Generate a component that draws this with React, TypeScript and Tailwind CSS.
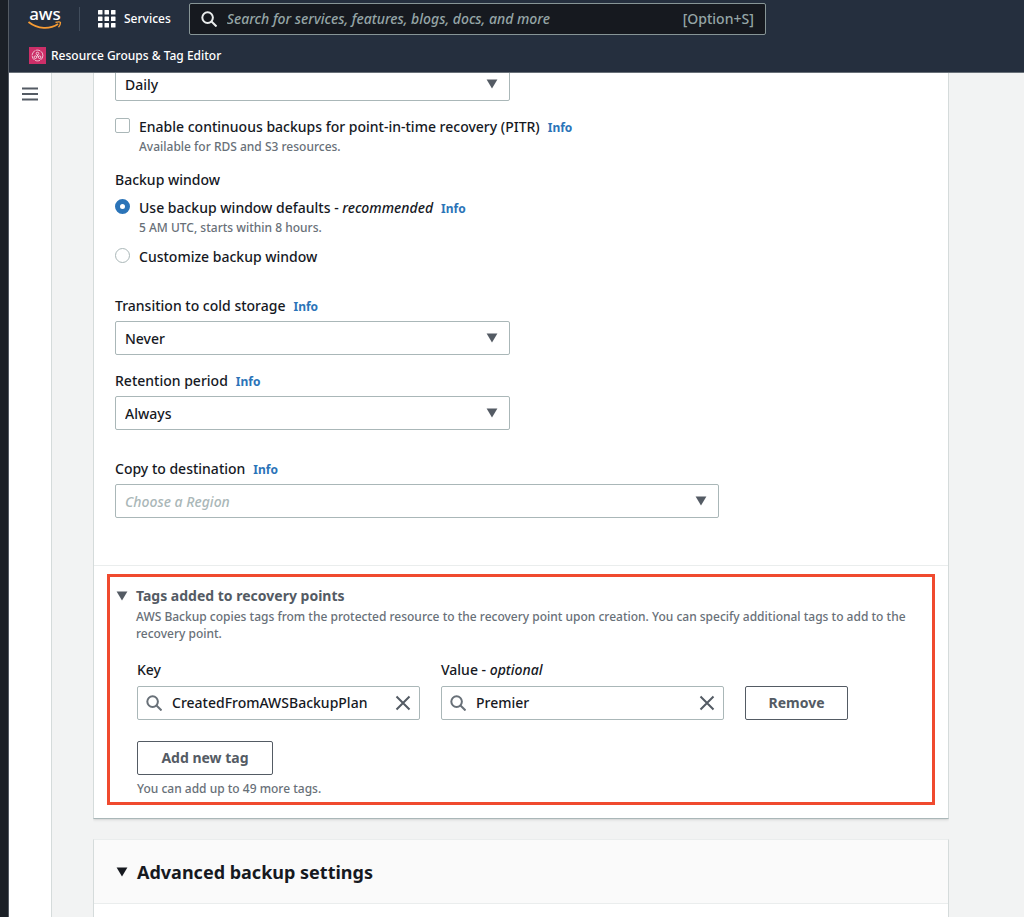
import type { ReactNode } from 'react';

const fieldBorder = 'border border-[#aab7b8] rounded-[2px]';

function InfoLink() {
  return (
    <a href="#info" className="ml-2 text-xs font-bold text-[#2b74b8]">
      Info
    </a>
  );
}

function Caret({ className }: { className: string }) {
  return (
    <svg className={className} viewBox="0 0 12 10" fill="currentColor">
      <path d="M0.6 0.5h10.8L6 9.6z" />
    </svg>
  );
}

function SearchIcon({ className }: { className: string }) {
  return (
    <svg className={className} viewBox="0 0 16 16" fill="none" stroke="currentColor" strokeWidth={2}>
      <circle cx="6.6" cy="6.6" r="5.3" />
      <path d="M10.5 10.5l5 5" />
    </svg>
  );
}

interface SelectBoxProps {
  id: string;
  value: string;
  ariaLabel?: string;
  placeholder?: boolean;
}

function SelectBox({ id, value, ariaLabel, placeholder }: SelectBoxProps) {
  return (
    <div className="relative">
      <select
        id={id}
        aria-label={ariaLabel}
        defaultValue={value}
        className={`block h-[34px] w-full appearance-none bg-white px-[9px] pt-px text-sm ${fieldBorder} ${
          placeholder ? 'italic text-[#aab7b8]' : ''
        }`}
      >
        <option>{value}</option>
      </select>
      <Caret className="pointer-events-none absolute right-3 top-3 h-[10px] w-3 text-[#545b64]" />
    </div>
  );
}

function Field({ id, label, children }: { id: string; label: string; children: ReactNode }) {
  return (
    <div>
      <div className="mb-1 leading-[22px]">
        <label htmlFor={id}>{label}</label>
        <InfoLink />
      </div>
      {children}
    </div>
  );
}

function TagInput({ id, value, label }: { id: string; value: string; label: ReactNode }) {
  return (
    <div className="w-[283px]">
      <label htmlFor={id} className="mb-[5px] block leading-[22px]">
        {label}
      </label>
      <div className={`flex h-[34px] items-center bg-white px-2 ${fieldBorder}`}>
        <SearchIcon className="h-4 w-4 shrink-0 text-[#687078]" />
        <input id={id} defaultValue={value} className="ml-[10px] min-w-0 flex-1 outline-none" />
        <button aria-label="Clear" className="shrink-0 text-[#545b64]">
          <svg className="h-4 w-4" viewBox="0 0 16 16" fill="none" stroke="currentColor" strokeWidth={2}>
            <path d="M1.5 1.5l13 13m0-13l-13 13" />
          </svg>
        </button>
      </div>
    </div>
  );
}

function Header() {
  return (
    <header className="h-[73px] border-b border-[#687078] bg-[#252f3e] text-white">
      <div className="flex h-[37px] items-center">
        <a href="#home" aria-label="aws" className="ml-[18px] flex h-6 w-9 flex-col items-center">
          <span className="text-[17px] leading-[14px]">aws</span>
          <svg className="h-2 w-9" viewBox="0 0 36 8" fill="none" stroke="#f79c34">
            <path d="M1.5 1C11 8.5 23 8.5 31 3" strokeWidth={1.8} />
            <path d="M28.5 1.4c3-.9 5-.5 5 .1 0 1.500-.7 3.300-2 4.800" strokeWidth={1.3} />
          </svg>
        </a>
        <div className="ml-4 h-6 w-px bg-[#414d5c]" />
        <button className="ml-[18px] flex items-center gap-2 text-xs">
          <svg className="h-[18px] w-[18px]" viewBox="0 0 18 18" fill="currentColor">
            {[0, 6.5, 13].map((y) =>
              [0, 6.5, 13].map((x) => <rect key={`${x}-${y}`} x={x} y={y} width="4.5" height="4.5" rx="0.5" />)
            )}
          </svg>
          Services
        </button>
        <label className="ml-[18px] flex h-8 w-[577px] items-center rounded-[2px] border border-[#879596] bg-[#16191f] px-[11px] text-sm">
          <SearchIcon className="h-4 w-4 shrink-0 text-[#eaeded]" />
          <input
            aria-label="Search"
            placeholder="Search for services, features, blogs, docs, and more"
            className="ml-[10px] min-w-0 flex-1 italic outline-none placeholder:text-[#95a5a6]"
          />
          <span className="text-[#95a5a6]">[Option+S]</span>
        </label>
      </div>
      <a href="#resource-groups" className="ml-5 mt-[10px] flex w-fit items-center gap-[5px] text-xs">
        <svg className="h-[17px] w-[17px]" viewBox="0 0 17 17" fill="none" stroke="#fff" strokeWidth={0.7}>
          <rect width="17" height="17" fill="#cc2f68" stroke="none" />
          <circle cx="8.5" cy="8.5" r="5.4" strokeDasharray="5 0.7" />
          <path d="M8.5 7.8v1.200M7.600 9.600l1-.6 1 .6" />
          <circle cx="8.5" cy="6.5" r="1.3" />
          <circle cx="6.4" cy="10.2" r="1.3" />
          <circle cx="10.6" cy="10.2" r="1.3" />
        </svg>
        Resource Groups &amp; Tag Editor
      </a>
    </header>
  );
}

export default function App() {
  return (
    <div className="flex h-screen overflow-hidden bg-[#f2f3f3] font-['Noto_Sans','Open_Sans',sans-serif] text-sm font-medium text-[#16191f]">
      <div className="w-[9px] shrink-0 border-r border-[#545b64] bg-[#1b2027]" />
      <div className="flex min-w-0 flex-1 flex-col">
        <Header />
        <div className="flex min-h-0 flex-1">
          <nav className="w-[43px] shrink-0 border-r border-[#d5dbdb] bg-white pt-[13px]">
            <button aria-label="Open navigation" className="ml-[13px] block text-[#545b64]">
              <svg className="h-4 w-4" viewBox="0 0 16 16" stroke="currentColor" strokeWidth={2}>
                <path d="M0 2.5h16M0 8h16M0 13.5h16" />
              </svg>
            </button>
          </nav>

          <main className="mr-[75px] ml-[41px] min-w-0 flex-1 overflow-hidden">
            <section className="border border-t-0 border-[#d5dbdb] border-b-[#aab7b8] bg-white shadow-sm">
              <div className="border-b border-[#eaeded] px-[21px] pb-[47px]">
                <div className="-mt-[6px] w-[395px]">
                  <SelectBox id="frequency" value="Daily" ariaLabel="Backup frequency" />
                </div>

                <div className="mt-[15px] flex gap-[9px]">
                  <input
                    id="pitr"
                    type="checkbox"
                    className={`mt-[2px] h-[15px] w-[15px] shrink-0 appearance-none ${fieldBorder}`}
                  />
                  <div>
                    <div className="leading-[22px]">
                      <label htmlFor="pitr">Enable continuous backups for point-in-time recovery (PITR)</label>
                      <InfoLink />
                    </div>
                    <p className="text-xs leading-[18px] text-[#687078]">Available for RDS and S3 resources.</p>
                  </div>
                </div>

                <fieldset className="mt-[13px]">
                  <legend className="leading-[22px]">Backup window</legend>
                  <div className="mt-[6px] flex gap-[9px]">
                    <input
                      id="window-default"
                      type="radio"
                      name="window"
                      defaultChecked
                      className="mt-[2px] h-[15px] w-[15px] shrink-0 appearance-none rounded-full border-[5px] border-[#2b74b8] bg-white"
                    />
                    <div>
                      <div className="leading-[22px]">
                        <label htmlFor="window-default">
                          Use backup window defaults - <i>recommended</i>
                        </label>
                        <InfoLink />
                      </div>
                      <p className="text-xs leading-[18px] text-[#687078]">5 AM UTC, starts within 8 hours.</p>
                    </div>
                  </div>
                  <div className="mt-[9px] flex gap-[9px]">
                    <input
                      id="window-custom"
                      type="radio"
                      name="window"
                      className="mt-[2px] h-[15px] w-[15px] shrink-0 appearance-none rounded-full border border-[#aab7b8] bg-white"
                    />
                    <label htmlFor="window-custom" className="leading-[22px]">
                      Customize backup window
                    </label>
                  </div>
                </fieldset>

                <div className="mt-[27px] w-[395px]">
                  <Field id="cold-storage" label="Transition to cold storage">
                    <SelectBox id="cold-storage" value="Never" />
                  </Field>
                </div>
                <div className="mt-[15px] w-[395px]">
                  <Field id="retention" label="Retention period">
                    <SelectBox id="retention" value="Always" />
                  </Field>
                </div>
                <div className="mt-7 w-[604px]">
                  <Field id="destination" label="Copy to destination">
                    <SelectBox id="destination" value="Choose a Region" placeholder />
                  </Field>
                </div>
              </div>

              {/* Highlighted tag editor */}
              <div className="mx-[13px] mt-2 mb-[13px] border-[3px] border-[#f04a2f] pb-1 pl-[6px]">
                <div className="flex pt-[9px]">
                  <Caret className="mt-[5px] h-[10px] w-3 shrink-0 text-[#545b64]" />
                  <div className="ml-2 min-w-0">
                    <h3 className="text-sm font-bold leading-5 text-[#545b64]">Tags added to recovery points</h3>
                    <p className="mt-[2px] text-xs leading-[17px] text-[#687078]">
                      AWS Backup copies tags from the protected resource to the recovery point upon creation. You can
                      specify additional tags to add to the recovery point.
                    </p>
                  </div>
                </div>
                <div className="ml-[21px] mt-[17px] flex items-end gap-[21px]">
                  <TagInput id="tag-key" label="Key" value="CreatedFromAWSBackupPlan" />
                  <TagInput
                    id="tag-value"
                    label={
                      <>
                        Value - <i>optional</i>
                      </>
                    }
                    value="Premier"
                  />
                  <button className="h-[34px] w-[103px] rounded-[2px] border border-[#545b64] font-bold text-[#545b64]">
                    Remove
                  </button>
                </div>
                <button className="ml-[21px] mt-[21px] block h-[34px] w-[136px] rounded-[2px] border border-[#545b64] font-bold text-[#545b64]">
                  Add new tag
                </button>
                <p className="ml-[21px] mt-[5px] text-xs leading-[18px] text-[#687078]">
                  You can add up to 49 more tags.
                </p>
              </div>
            </section>

            <section className="mt-5 border border-[#d5dbdb] border-t-[#eaeded] bg-white pb-10">
              <div className="flex h-16 items-center gap-[9px] border-b border-[#eaeded] bg-[#fafafa] pl-[22px]">
                <Caret className="h-[10px] w-3" />
                <h2 className="text-lg font-bold">Advanced backup settings</h2>
              </div>
            </section>
          </main>
        </div>
      </div>
    </div>
  );
}
